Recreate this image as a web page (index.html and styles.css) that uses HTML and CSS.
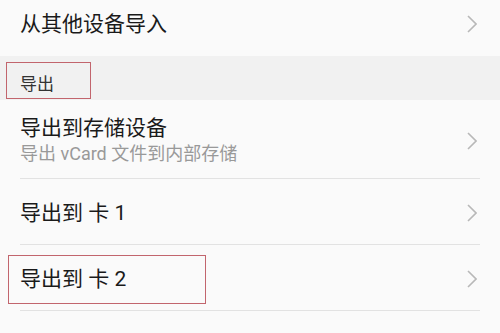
FILE: index.html
```html
<!DOCTYPE html>
<html lang="zh-CN">
<head>
<meta charset="utf-8">
<link rel="stylesheet" href="styles.css">
</head>
<body>
<div class="page">
  <div class="row row-top">
    <div class="texts"><div class="title">从其他设备导入</div></div>
    <svg class="chev" viewBox="0 0 10 18"><path d="M1 1 L9 9 L1 17" /></svg>
  </div>
  <div class="section">
    <span class="section-title">导出</span>
    <div class="mark mark-section"></div>
  </div>
  <div class="row row-two">
    <div class="texts">
      <div class="title">导出到存储设备</div>
      <div class="sub">导出 vCard 文件到内部存储</div>
    </div>
    <svg class="chev" viewBox="0 0 10 18"><path d="M1 1 L9 9 L1 17" /></svg>
  </div>
  <div class="row row-one">
    <div class="texts"><div class="title">导出到 卡 1</div></div>
    <svg class="chev" viewBox="0 0 10 18"><path d="M1 1 L9 9 L1 17" /></svg>
  </div>
  <div class="row row-one">
    <div class="texts"><div class="title">导出到 卡 2</div></div>
    <svg class="chev" viewBox="0 0 10 18"><path d="M1 1 L9 9 L1 17" /></svg>
    <div class="mark mark-row"></div>
  </div>
</div>
</body>
</html>
```

FILE: styles.css
```css
html, body {
  margin: 0;
  padding: 0;
  background: #fafafa;
}
body {
  font-family: Roboto, "Noto Sans CJK SC", sans-serif;
  width: 500px;
  height: 333px;
  overflow: hidden;
}
.page {
  display: flex;
  flex-direction: column;
}
.row {
  position: relative;
  display: flex;
  align-items: center;
  justify-content: space-between;
  padding: 0 23px 0 20px;
  box-sizing: border-box;
}
.row-top {
  height: 56px;
  padding-bottom: 9px;
}
.row-two {
  height: 79px;
  padding-top: 2px;
}
.row-one {
  height: 66px;
  padding-top: 1px;
}
.row-two::after,
.row-one::after {
  content: "";
  position: absolute;
  left: 20px;
  right: 20px;
  bottom: 0;
  height: 1px;
  background: #e2e2e2;
}
.title {
  font-size: 21px;
  line-height: 26px;
  color: #1a1a1a;
}
.sub {
  font-size: 18px;
  line-height: 24px;
  color: #999999;
  margin-top: 1px;
}
.chev {
  width: 10px;
  height: 18px;
  fill: none;
  stroke: #b8b8b8;
  stroke-width: 1.6;
}
.section {
  position: relative;
  height: 44px;
  background: #f1f1f1;
  display: flex;
  align-items: center;
  padding: 0 0 0 20px;
  padding-top: 8px;
  box-sizing: border-box;
}
.section-title {
  font-size: 17px;
  color: #333333;
}
.mark {
  position: absolute;
  border: 1.5px solid #c2656d;
  box-sizing: border-box;
}
.mark-section {
  left: 6px;
  top: 6px;
  width: 85px;
  height: 37px;
}
.mark-row {
  left: 8px;
  top: 10px;
  width: 198px;
  height: 49px;
}
```
